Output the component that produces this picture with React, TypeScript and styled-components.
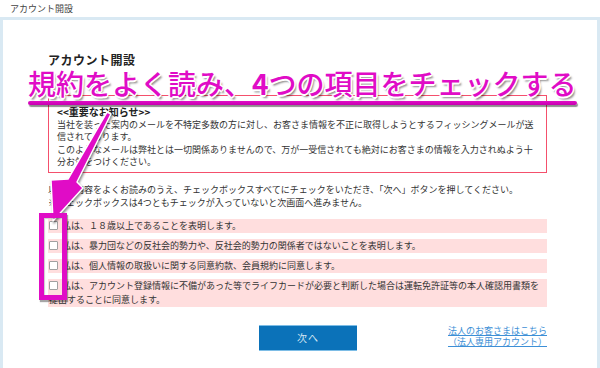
import { FC } from 'react'
import styled, { createGlobalStyle } from 'styled-components';

const GlobalStyle = createGlobalStyle`
  html, body {
    margin: 0;
    padding: 0;
    background: #fff;
    font-family: "Noto Sans CJK JP", "Noto Sans", sans-serif;
    color: #333;
  }
  * {
    box-sizing: border-box;
  }
`;

const MAGENTA = '#e00cc6';

const PageHeader = styled.div`
  height: 17px;
  line-height: 17px;
  padding-left: 10px;
  font-size: 9px;
  color: #444;
`;

const Frame = styled.div`
  background: #d9e9f3;
  padding: 3px 3px 0;
  height: 351px;
  overflow: hidden;
`;

const Panel = styled.div`
  position: relative;
  background: #fff;
  height: 348px;
  padding: 32px 50px 0 45px;
  overflow: hidden;
`;

const Title = styled.h1`
  margin: 0;
  font-size: 12px;
  line-height: 16px;
  font-weight: bold;
  letter-spacing: 0.5px;
  color: #222;
`;

const Notice = styled.div`
  margin-top: 27px;
  border: 1px solid #f4506c;
  padding: 10px 8px 3px;
  font-size: 9px;
  line-height: 12.5px;

  & .notice-title {
    font-weight: bold;
    font-size: 10px;
    color: #222;
  }

  & p {
    margin: 0;
  }
`;

const Lead = styled.div`
  margin-top: 10px;
  font-size: 9px;
  line-height: 13px;
`;

const CheckList = styled.div`
  margin-top: 10px;
  display: flex;
  flex-direction: column;
  gap: 6px;
`;

const CheckRow = styled.label`
  display: block;
  background: #ffdede;
  padding: 0 6px 0 1px;
  font-size: 9px;
  line-height: 14px;
`;

const Box = styled.input`
  appearance: none;
  width: 9px;
  height: 9px;
  margin: 0 4px 0 0;
  border: 1px solid #a0a0a0;
  border-radius: 1px;
  background: #fff;
  vertical-align: -1px;
`;

const Actions = styled.div`
  margin-top: 18px;
  display: flex;
  align-items: flex-start;
`;

const NextButton = styled.button`
  margin-left: 211px;
  width: 98px;
  height: 26px;
  border: 0;
  border-top: 1px solid #7dbde6;
  border-bottom: 1px solid #7dbde6;
  background: #0b72b9;
  color: #d4e6f3;
  font-family: inherit;
  font-size: 10px;
  letter-spacing: 1px;
`;

const CorpLink = styled.a`
  margin-left: auto;
  color: #3d8fd6;
  font-size: 9px;
  line-height: 11.5px;
  text-align: center;
  text-decoration: underline;
`;

const Banner = styled.div`
  position: absolute;
  left: 25px;
  top: 49px;
  font-size: 28px;
  line-height: 28px;
  font-weight: 500;
  color: ${MAGENTA};
  white-space: nowrap;
  text-shadow:
    -1.5px 0 0 #fff, 1.5px 0 0 #fff, 0 -1.5px 0 #fff, 0 1.5px 0 #fff,
    -1px -1px 0 #fff, 1px -1px 0 #fff, -1px 1px 0 #fff, 1px 1px 0 #fff,
    2px 2.5px 2px rgba(0, 0, 0, 0.45);

  & b {
    font-weight: bold;
  }
`;

const BannerBar = styled.div`
  position: absolute;
  left: 25px;
  top: 81px;
  width: 549px;
  height: 4px;
  border-radius: 2px;
  background: linear-gradient(${MAGENTA}, #c700b0);
  box-shadow: 1px 2px 1px rgba(0, 0, 0, 0.45);
`;

const Highlight = styled.div`
  position: absolute;
  left: 36px;
  top: 193px;
  width: 28px;
  height: 87px;
  border: 5px solid ${MAGENTA};
  box-shadow: 1px 2px 1px rgba(0, 0, 0, 0.35), inset 1px 1px 1px rgba(0, 0, 0, 0.2);
`;

const ArrowSvg = styled.svg`
  position: absolute;
  left: 0;
  top: 0;
  pointer-events: none;
  filter: drop-shadow(1px 2px 1px rgba(0, 0, 0, 0.45));
`;

const items = [
  '私は、１８歳以上であることを表明します。',
  '私は、暴力団などの反社会的勢力や、反社会的勢力の関係者ではないことを表明します。',
  '私は、個人情報の取扱いに関する同意約款、会員規約に同意します。',
  '私は、アカウント登録情報に不備があった等でライフカードが必要と判断した場合は運転免許証等の本人確認用書類を提出することに同意します。',
];

const Arrow: FC = () => (
  <ArrowSvg width="140" height="220" viewBox="0 0 140 220">
    <polygon
      points="104,92 108,94 74,162 80,168 50,201 48,160 65,159"
      fill={MAGENTA}
      stroke="#fff"
      strokeWidth="1.5"
      strokeLinejoin="round"
    />
  </ArrowSvg>
);

const App = () => {
  return (
    <>
      <GlobalStyle />
      <PageHeader>アカウント開設</PageHeader>
      <Frame>
        <Panel>
          <Title>アカウント開設</Title>
          <Notice>
            <div className='notice-title'>&lt;&lt;重要なお知らせ&gt;&gt;</div>
            <p>当社を装った案内のメールを不特定多数の方に対し、お客さま情報を不正に取得しようとするフィッシングメールが送信されております。</p>
            <p>このようなメールは弊社とは一切関係ありませんので、万が一受信されても絶対にお客さまの情報を入力されぬよう十分お気をつけください。</p>
          </Notice>
          <Lead>
            以下の内容をよくお読みのうえ、チェックボックスすべてにチェックをいただき、「次へ」ボタンを押してください。<br />
            ※チェックボックスは4つともチェックが入っていないと次画面へ進みません。
          </Lead>
          <CheckList>
            {
              items.map((text, index) => (
                <CheckRow key={index}>
                  <Box type='checkbox' />{text}
                </CheckRow>
              ))
            }
          </CheckList>
          <Actions>
            <NextButton>次へ</NextButton>
            <CorpLink href='#'>法人のお客さまはこちら<br />（法人専用アカウント）</CorpLink>
          </Actions>

          <Banner>規約をよく読み、<b>4</b>つの項目をチェックする</Banner>
          <BannerBar />
          <Arrow />
          <Highlight />
        </Panel>
      </Frame>
    </>
  );
};

export default App;
